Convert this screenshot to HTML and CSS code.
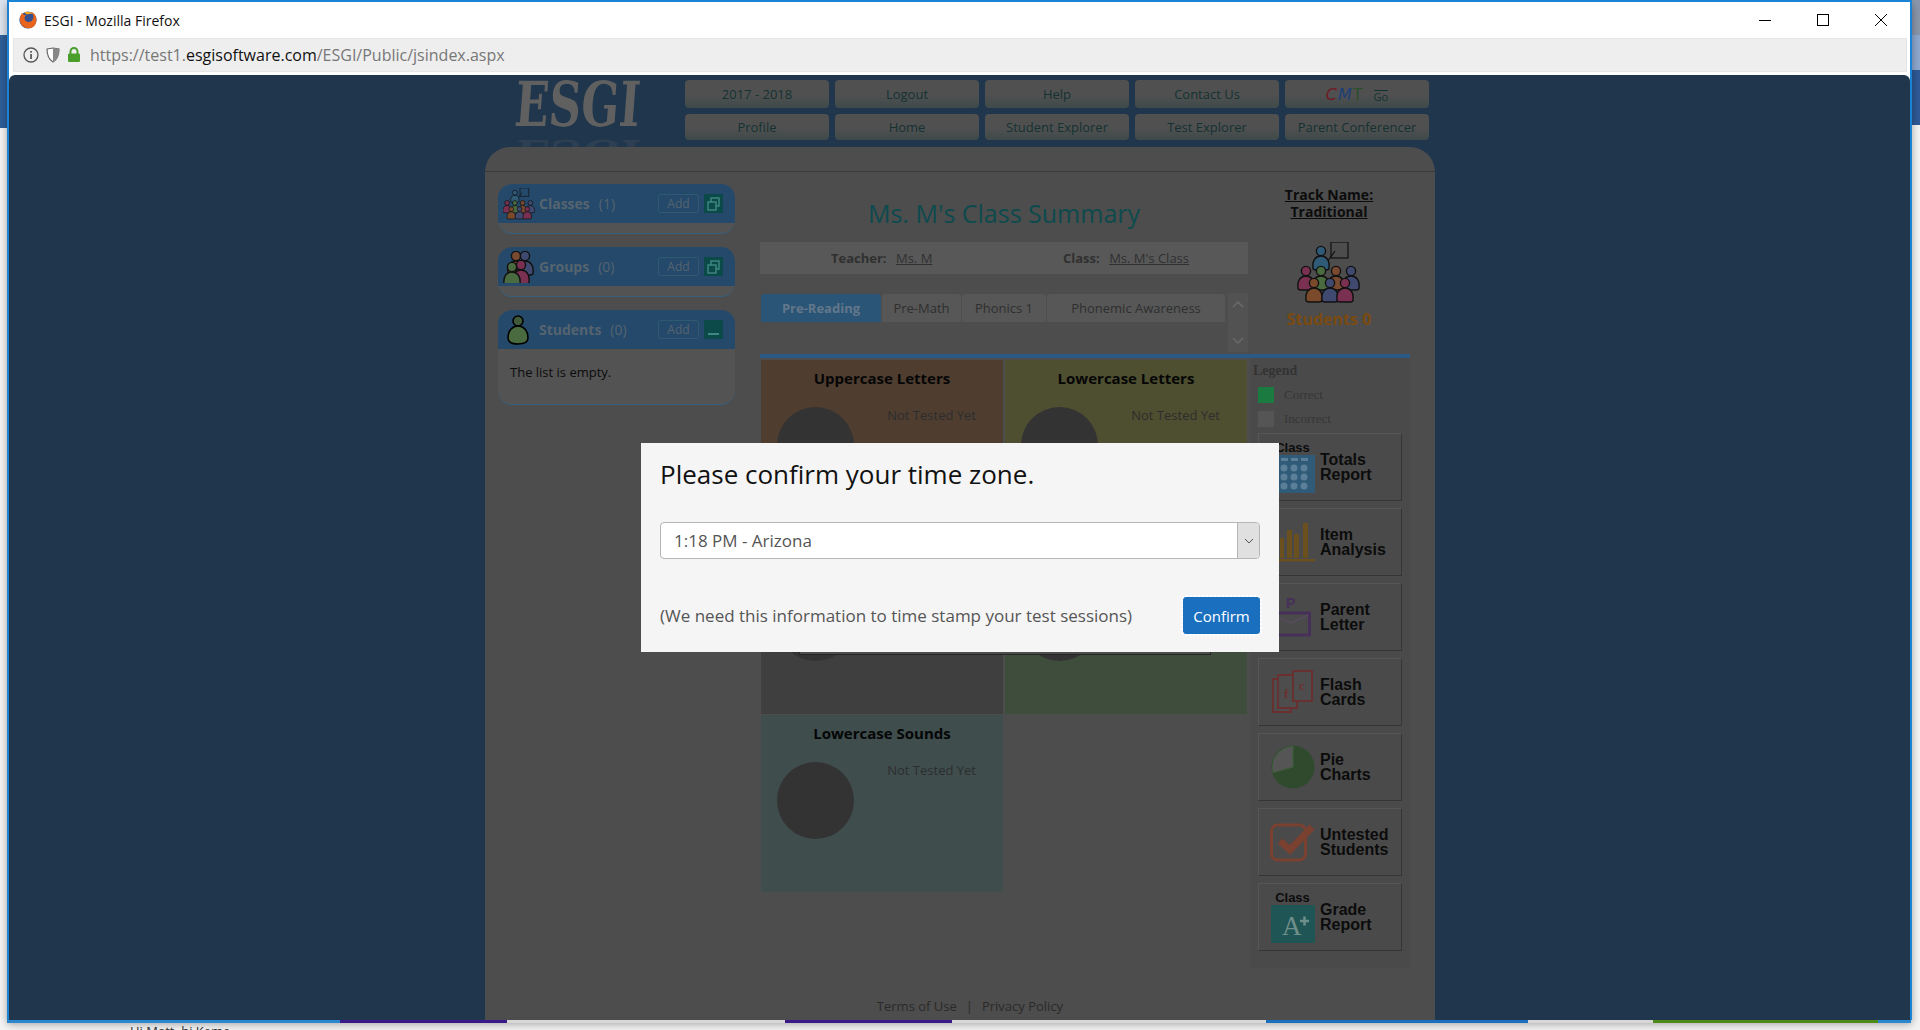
FILE: index.html
```html
<!DOCTYPE html>
<html lang="en">
  <head>
    <meta charset="UTF-8" />
    <title>ESGI - Mozilla Firefox</title>
    <link rel="stylesheet" href="styles.css">
  </head>
  <body>
    <svg class="defs" width="0" height="0">
      <defs>
        <g id="person">
          <path d="M-8 18 C-9 10 -5 6 0 6 C5 6 9 10 8 18 Q8 20 5 20 H-5 Q-8 20 -8 18Z" stroke="#111" stroke-width="1.4"/>
          <circle cy="1" r="4.6" stroke="#111" stroke-width="1.4"/>
        </g>
        <g id="crowd">
          <rect x="33" y="0" width="17" height="16" fill="none" stroke="#111" stroke-width="1.2"/>
          <path d="M37 9 L29 20" stroke="#111" stroke-width="1.2"/>
          <use href="#person" x="23" y="8" fill="#2f5a78"/>
          <use href="#person" x="8" y="28" fill="#7a3050"/>
          <use href="#person" x="38" y="28" fill="#7a4a30"/>
          <use href="#person" x="53" y="28" fill="#404a70"/>
          <use href="#person" x="23" y="28" fill="#4a6a40"/>
          <use href="#person" x="16" y="40" fill="#7a4a2a"/>
          <use href="#person" x="32" y="40" fill="#404a70"/>
          <use href="#person" x="47" y="40" fill="#7a3050"/>
        </g>
        <g id="expand">
          <rect x="0" y="0" width="19" height="19" fill="#0b4a48"/>
          <rect x="7" y="4" width="8" height="8" fill="none" stroke="#3f8a80" stroke-width="1.4"/>
          <rect x="4" y="8" width="8" height="8" fill="#0b4a48" stroke="#3f8a80" stroke-width="1.4"/>
        </g>
      </defs>
    </svg>

    <div class="desktop">
      <div class="edge edge-left">
        <div class="edge-a"></div>
        <div class="edge-b"></div>
      </div>
      <div class="edge edge-right">
        <div class="edge-c"></div>
        <div class="edge-d"></div>
        <div class="edge-e"></div>
      </div>

      <div class="window">
        <div class="titlebar">
          <svg class="ff-logo" width="18" height="18" viewBox="0 0 18 18">
            <circle cx="9" cy="9" r="8.6" fill="#35508f"/>
            <path d="M3 2 C1 5 0 9 2 13 C4 17 10 18.5 14 16 C17 14 18 10 17 6 C16 3 14 1.5 12 1 C14 3 15 5 14 8 C13 10.5 10 12 7.500 10.500 C5 9 5 6 7 4 C5 4 4 3.500 3 2Z" fill="#e8641c"/>
            <path d="M5 1.500 C8 0 12 0.500 14 3 C12 2.500 10 2.500 8 3.500Z" fill="#f6a51e"/>
          </svg>
          <span class="title-text">ESGI - Mozilla Firefox</span>
          <div class="win-btns">
            <svg width="14" height="14" viewBox="0 0 14 14"><path d="M1 7.500 H13" stroke="#000"/></svg>
            <svg width="14" height="14" viewBox="0 0 14 14"><rect x="1.500" y="1.500" width="11" height="11" fill="none" stroke="#000"/></svg>
            <svg width="14" height="14" viewBox="0 0 14 14"><path d="M1 1 L13 13 M13 1 L1 13" stroke="#000"/></svg>
          </div>
        </div>

        <div class="urlbar">
          <svg width="16" height="16" viewBox="0 0 16 16">
            <circle cx="8" cy="8" r="7" fill="none" stroke="#555" stroke-width="1.300"/>
            <rect x="7.200" y="7" width="1.700" height="5" fill="#555"/>
            <rect x="7.200" y="4" width="1.700" height="1.700" fill="#555"/>
          </svg>
          <svg width="14" height="16" viewBox="0 0 14 16">
            <path d="M1 2 L7 1 L13 2 C13 8 12 12 7 15 C2 12 1 8 1 2Z" fill="#fff" stroke="#666" stroke-width="1.200"/>
            <path d="M7 1 L13 2 C13 8 12 12 7 15Z" fill="#888"/>
          </svg>
          <svg width="14" height="16" viewBox="0 0 14 16">
            <path d="M3.500 7 V4.500 A3.500 3.500 0 0 1 10.500 4.500 V7" fill="none" stroke="#4a9e2c" stroke-width="2"/>
            <rect x="1" y="6.500" width="12" height="8.500" rx="1.200" fill="#4a9e2c"/>
          </svg>
          <span class="url">https://test1.<b>esgisoftware.com</b>/ESGI/Public/jsindex.aspx</span>
        </div>

        <div class="page">
          <div class="site">
            <div class="site-top">
              <div class="logo">
                <span class="logo-text">ESGI</span>
                <span class="logo-mirror" aria-hidden="true">ESGI</span>
              </div>
              <div class="nav">
                <div class="nav-btn">2017 - 2018</div>
                <div class="nav-btn">Logout</div>
                <div class="nav-btn">Help</div>
                <div class="nav-btn">Contact Us</div>
                <div class="nav-btn cmt">
                  <span class="cmt-word"><i class="c-red">C</i><i class="c-blue">M</i><i class="c-green">T</i></span>
                  <span class="cmt-go">Go</span>
                </div>
                <div class="nav-btn">Profile</div>
                <div class="nav-btn">Home</div>
                <div class="nav-btn">Student Explorer</div>
                <div class="nav-btn">Test Explorer</div>
                <div class="nav-btn">Parent Conferencer</div>
              </div>
            </div>

            <div class="panel">
              <div class="panel-head"></div>
              <div class="panel-body">
                <!-- left lists -->
                <div class="side">
                  <div class="card">
                    <div class="card-head">
                      <svg class="card-icon" width="32" height="32" viewBox="0 0 62 62"><use href="#crowd"/></svg>
                      <span class="card-name">Classes</span>
                      <span class="card-count">(1)</span>
                      <span class="add">Add</span>
                      <svg width="19" height="19" viewBox="0 0 19 19"><use href="#expand"/></svg>
                    </div>
                    <div class="card-foot"></div>
                  </div>
                  <div class="card">
                    <div class="card-head">
                      <svg class="card-icon" width="32" height="32" viewBox="0 0 32 32">
                        <use href="#person" x="13" y="4" fill="#7a4a30"/>
                        <use href="#person" x="22" y="4" fill="#404a70"/>
                        <use href="#person" x="18" y="13" fill="#7a3050"/>
                        <use href="#person" x="9" y="15" fill="#4a6a40"/>
                      </svg>
                      <span class="card-name">Groups</span>
                      <span class="card-count">(0)</span>
                      <span class="add">Add</span>
                      <svg width="19" height="19" viewBox="0 0 19 19"><use href="#expand"/></svg>
                    </div>
                    <div class="card-foot"></div>
                  </div>
                  <div class="card">
                    <div class="card-head">
                      <svg class="card-icon" width="32" height="32" viewBox="0 0 32 32">
                        <circle cx="15" cy="7" r="5" fill="#3f5a38" stroke="#000" stroke-width="1.600"/>
                        <path d="M5 24 C5 16 10 12 15 12 C20 12 25 16 25 24 C25 29 21 30 15 30 C9 30 5 29 5 24Z" fill="#4a6a40" stroke="#000" stroke-width="1.600"/>
                      </svg>
                      <span class="card-name">Students</span>
                      <span class="card-count">(0)</span>
                      <span class="add">Add</span>
                      <span class="collapse"></span>
                    </div>
                    <div class="card-text">The list is empty.</div>
                  </div>
                </div>

                <div class="content">
                  <div class="content-top">
                    <div class="summary">
                      <h1 class="summary-title">Ms. M's Class Summary</h1>
                      <div class="info">
                        <div class="info-item"><b>Teacher:</b> <u>Ms. M</u></div>
                        <div class="info-item"><b>Class:</b> <u>Ms. M's Class</u></div>
                      </div>
                      <div class="tabs-row">
                        <div class="tabs">
                          <div class="tab tab-active">Pre-Reading</div>
                          <div class="tab tab-math">Pre-Math</div>
                          <div class="tab tab-phonics">Phonics 1</div>
                          <div class="tab tab-aware">Phonemic Awareness</div>
                        </div>
                        <div class="tab-scroll">
                          <svg width="12" height="8" viewBox="0 0 12 8"><path d="M1 7 L6 2 L11 7" fill="none" stroke="#6a6a6a" stroke-width="1.500"/></svg>
                          <svg width="12" height="8" viewBox="0 0 12 8"><path d="M1 1 L6 6 L11 1" fill="none" stroke="#6a6a6a" stroke-width="1.500"/></svg>
                        </div>
                      </div>
                    </div>
                    <div class="track">
                      <div class="track-name">Track Name:<br>Traditional</div>
                      <svg class="track-icon" width="66" height="62" viewBox="0 0 62 62"><use href="#crowd"/></svg>
                      <div class="track-count">Students 0</div>
                    </div>
                  </div>
                  <div class="rule"></div>
                  <div class="content-main">
                    <div class="tiles">
                      <div class="tile tile-orange">
                        <div class="tile-title">Uppercase Letters</div>
                        <div class="tile-body"><div class="dot"></div><div class="tile-note">Not Tested Yet</div></div>
                      </div>
                      <div class="tile tile-olive">
                        <div class="tile-title">Lowercase Letters</div>
                        <div class="tile-body"><div class="dot"></div><div class="tile-note">Not Tested Yet</div></div>
                      </div>
                      <div class="tile tile-grey">
                        <div class="tile-title"></div>
                        <div class="tile-body"><div class="dot"></div></div>
                      </div>
                      <div class="tile tile-green">
                        <div class="tile-title"></div>
                        <div class="tile-body"><div class="dot"></div></div>
                      </div>
                      <div class="tile tile-teal">
                        <div class="tile-title">Lowercase Sounds</div>
                        <div class="tile-body"><div class="dot"></div><div class="tile-note">Not Tested Yet</div></div>
                      </div>
                    </div>

                    <div class="tools">
                      <div class="legend-title">Legend</div>
                      <div class="legend-row"><span class="swatch swatch-correct"></span>Correct</div>
                      <div class="legend-row"><span class="swatch swatch-wrong"></span>Incorrect</div>

                      <div class="report">
                        <div class="report-icon">
                          <span class="report-tag">Class</span>
                          <svg width="44" height="38" viewBox="0 0 44 38">
                            <rect width="44" height="38" fill="#2f5a78"/>
                            <g fill="#5b7f98">
                              <rect x="10" y="3" width="7" height="3"/><rect x="20" y="3" width="7" height="3"/><rect x="30" y="3" width="7" height="3"/>
                              <circle cx="13" cy="13" r="3.500"/><circle cx="23" cy="13" r="3.500"/><circle cx="33" cy="13" r="3.500"/>
                              <circle cx="13" cy="22" r="3.500"/><circle cx="23" cy="22" r="3.500"/><circle cx="33" cy="22" r="3.500"/>
                              <circle cx="13" cy="31" r="3.500"/><circle cx="23" cy="31" r="3.500"/><circle cx="33" cy="31" r="3.500"/>
                            </g>
                          </svg>
                        </div>
                        <div class="report-name">Totals<br>Report</div>
                      </div>
                      <div class="report">
                        <div class="report-icon">
                          <svg width="44" height="40" viewBox="0 0 44 40">
                            <g fill="#6a4f1f">
                              <rect x="9" y="16" width="4" height="20"/><rect x="16" y="8" width="5" height="28"/>
                              <rect x="23" y="12" width="5" height="24"/><rect x="32" y="1" width="5" height="35"/>
                              <rect x="0" y="37" width="44" height="2.500"/>
                            </g>
                          </svg>
                        </div>
                        <div class="report-name">Item<br>Analysis</div>
                      </div>
                      <div class="report">
                        <div class="report-icon">
                          <svg width="44" height="42" viewBox="0 0 44 42">
                            <text x="15" y="12" class="svg-p">P</text>
                            <rect x="1.500" y="17" width="37" height="22" fill="none" stroke="#46305a" stroke-width="3"/>
                            <path d="M3 19 L20 27 L37 19" fill="none" stroke="#5e4a6a" stroke-width="1"/>
                          </svg>
                        </div>
                        <div class="report-name">Parent<br>Letter</div>
                      </div>
                      <div class="report">
                        <div class="report-icon">
                          <svg width="44" height="44" viewBox="0 0 44 44">
                            <g fill="#4d4d4d" stroke="#6b2f2f" stroke-width="1.800">
                              <path d="M13 9 H2 V42 H20 V38"/>
                              <path d="M23 5 H7 V38 H26 V8"/>
                              <rect x="22" y="1" width="19" height="30"/>
                            </g>
                            <text x="13" y="28" class="svg-card">f</text>
                            <text x="28" y="20" class="svg-card">c</text>
                          </svg>
                        </div>
                        <div class="report-name">Flash<br>Cards</div>
                      </div>
                      <div class="report">
                        <div class="report-icon">
                          <svg width="44" height="44" viewBox="0 0 44 44">
                            <circle cx="22" cy="22" r="21.500" fill="#2f4a2c"/>
                            <path d="M22 22 L22 1.500 A20.500 20.500 0 0 0 2.200 27.500Z" fill="#555" stroke="#3f5f3c"/>
                          </svg>
                        </div>
                        <div class="report-name">Pie<br>Charts</div>
                      </div>
                      <div class="report">
                        <div class="report-icon">
                          <svg width="45" height="40" viewBox="0 0 45 40">
                            <rect x="1.500" y="3" width="34" height="35" rx="6" fill="none" stroke="#7a4030" stroke-width="3"/>
                            <path d="M10 19 L20 28 L42 5" fill="none" stroke="#7a4030" stroke-width="7"/>
                          </svg>
                        </div>
                        <div class="report-name">Untested<br>Students</div>
                      </div>
                      <div class="report">
                        <div class="report-icon">
                          <span class="report-tag">Class</span>
                          <svg width="44" height="38" viewBox="0 0 44 38">
                            <rect width="44" height="38" fill="#1f5555"/>
                            <text x="11" y="30" class="svg-grade">A</text>
                            <path d="M29 16 H38 M33.500 11.500 V20.500" stroke="#6f8f8a" stroke-width="2.500"/>
                          </svg>
                        </div>
                        <div class="report-name">Grade<br>Report</div>
                      </div>
                    </div>
                  </div>
                </div>
              </div>
              <div class="panel-foot">
                <span>Terms of Use</span><span class="foot-sep">|</span><span>Privacy Policy</span>
              </div>
            </div>
          </div>
        </div>
      </div>

      <div class="behind-strip">
        <span class="seg seg-1"></span><span class="seg seg-2"></span><span class="seg seg-3"></span>
        <span class="seg seg-2"></span><span class="seg seg-4"></span><span class="seg seg-5"></span>
        <span class="seg seg-6"></span><span class="seg seg-7"></span><span class="seg seg-8"></span>
      </div>
      <div class="behind-text">Hi Matt, hi Keme</div>

      <!-- dialogs on top of the page -->
      <div class="back-dialog"></div>
      <div class="modal">
        <div class="modal-title">Please confirm your time zone.</div>
        <div class="select">
          <span class="select-value">1:18 PM - Arizona</span>
          <span class="select-arrow">
            <svg width="10" height="6" viewBox="0 0 10 6"><path d="M1 1 L5 5 L9 1" fill="none" stroke="#555"/></svg>
          </span>
        </div>
        <div class="modal-foot">
          <span class="modal-note">(We need this information to time stamp your test sessions)</span>
          <span class="confirm">Confirm</span>
        </div>
      </div>
    </div>
  </body>
</html>
```

FILE: styles.css
```css
html, body {
  margin: 0;
  height: 100%;
  overflow: hidden;
  background: #f4f4f4;
}
.defs {
  position: absolute;
}
.desktop {
  position: relative;
  width: 1920px;
  height: 1030px;
  overflow: hidden;
  font-family: "Open Sans", "Noto Sans", sans-serif;
}
.edge {
  position: absolute;
  top: 0;
  width: 8px;
}
.edge-left {
  left: 0;
}
.edge-right {
  right: 0;
}
.edge-a {
  height: 35px;
  background: #dde3ee;
}
.edge-b {
  height: 93px;
  background: #2f5f9a;
}
.edge-c {
  height: 35px;
  background: #8a96ab;
}
.edge-d {
  height: 35px;
  background: #8fa8cf;
}
.edge-e {
  height: 55px;
  background: #2e5a96;
}

/* browser window */
.window {
  position: relative;
  margin-left: 7px;
  width: 1901px;
  height: 1018px;
  border: 2px solid #1a83d4;
  border-bottom: 0;
  background: #fff;
  display: flex;
  flex-direction: column;
  box-shadow: 0 4px 8px rgba(0, 0, 0, 0.35);
}
.titlebar {
  height: 36px;
  flex: none;
  display: flex;
  align-items: center;
  padding-left: 10px;
}
.ff-logo {
  margin-right: 7px;
}
.title-text {
  font-size: 14px;
  color: #111;
}
.win-btns {
  margin-left: auto;
  display: flex;
  gap: 44px;
  padding-right: 22px;
}
.urlbar {
  height: 34px;
  flex: none;
  margin: 0 3px 0 4px;
  background: #eeeeee;
  border: 1px solid #e6e6e6;
  box-sizing: border-box;
  display: flex;
  align-items: center;
  gap: 7px;
  padding-left: 9px;
}
.url {
  margin-left: 2px;
  font-size: 16px;
  color: #777;
}
.url b {
  font-weight: 400;
  color: #111;
}
.page {
  flex: 1;
  margin-top: 3px;
  background: #1f364c;
  border-radius: 6px 6px 0 0;
  overflow: hidden;
}

/* site */
.site {
  margin-left: 476px;
  width: 950px;
  height: 100%;
  display: flex;
  flex-direction: column;
}
.site-top {
  height: 72px;
  flex: none;
  display: flex;
  box-sizing: border-box;
  padding-top: 5px;
}
.logo {
  position: relative;
  width: 200px;
  flex: none;
}
.logo-text, .logo-mirror {
  position: absolute;
  left: 30px;
  top: -11px;
  font-family: "DejaVu Serif", serif;
  font-weight: 700;
  font-size: 62px;
  line-height: 72px;
  color: #606060;
  transform-origin: left center;
  transform: scaleX(0.72) skewX(-6deg);
}
.logo-mirror {
  top: 37px;
  opacity: 0.22;
  transform: scaleX(0.72) scaleY(-0.6) skewX(6deg);
}
.nav {
  display: grid;
  grid-template-columns: repeat(5, 144px);
  grid-template-rows: 28px 26px;
  gap: 6px;
}
.nav-btn {
  display: flex;
  align-items: center;
  justify-content: center;
  gap: 10px;
  border-radius: 4px;
  background: linear-gradient(#505050 55%, #3e4a4a);
  color: #143232;
  font-size: 13px;
}
.cmt-word {
  font-size: 16px;
  letter-spacing: 1px;
  font-family: "DejaVu Sans", sans-serif;
}
.c-red {
  color: #6e1a24;
}
.c-blue {
  color: #1d3f78;
}
.c-green {
  color: #2c4f2c;
  font-style: normal;
}
.cmt-go {
  font-size: 11px;
  border-top: 1px solid #143232;
  line-height: 11px;
  margin-top: 4px;
}
.panel {
  flex: 1;
  background: #4d4d4d;
  border-radius: 25px 25px 0 0;
  display: flex;
  flex-direction: column;
  position: relative;
  overflow: hidden;
}
.panel-head {
  height: 24px;
  flex: none;
  border-bottom: 1px solid #3a3a3a;
}
.panel-body {
  display: flex;
  gap: 25px;
  padding-left: 13px;
  flex: 1;
}
.panel-foot {
  flex: none;
  height: 21px;
  display: flex;
  justify-content: center;
  gap: 9px;
  padding-left: 20px;
  font-size: 13px;
  line-height: 15px;
  color: #2a2a2a;
}

/* left lists */
.side {
  width: 237px;
  flex: none;
  padding-top: 12px;
}
.card {
  background: #535353;
  border-radius: 14px;
  border-bottom: 1px solid #35607f;
  margin-bottom: 13px;
  overflow: hidden;
}
.card-head {
  height: 39px;
  background: #24496b;
  display: flex;
  align-items: center;
  padding: 0 12px 0 5px;
  font-size: 14px;
  color: #56646f;
}
.card-icon {
  flex: none;
  margin-right: 4px;
}
.card-name {
  font-weight: 700;
}
.card-count {
  margin-left: 9px;
}
.add {
  margin-left: auto;
  margin-right: 5px;
  width: 41px;
  height: 19px;
  box-sizing: border-box;
  border: 1px solid #2d5a6e;
  border-radius: 2px;
  text-align: center;
  font-size: 12px;
  line-height: 17px;
}
.collapse {
  width: 19px;
  height: 19px;
  background: #0b4a48;
  position: relative;
}
.collapse::after {
  content: "";
  position: absolute;
  left: 4px;
  right: 4px;
  bottom: 4px;
  height: 2px;
  background: #3f8a80;
}
.card-foot {
  height: 10px;
}
.card-text {
  height: 55px;
  box-sizing: border-box;
  padding: 14px 12px;
  font-size: 13px;
  line-height: 18px;
  color: #0c0c0c;
}

/* summary */
.content {
  width: 650px;
  flex: none;
  display: flex;
  flex-direction: column;
}
.content-top {
  height: 182px;
  flex: none;
  display: flex;
}
.summary {
  width: 488px;
  flex: none;
  padding-top: 25px;
}
.summary-title {
  margin: 0;
  font-weight: 400;
  font-size: 25px;
  line-height: 32px;
  text-align: center;
  color: #0d4a4e;
}
.info {
  margin-top: 13px;
  height: 32px;
  background: #585858;
  display: grid;
  grid-template-columns: 303px 1fr;
  align-items: center;
  font-size: 13px;
  color: #303030;
}
.info-item {
  padding-left: 71px;
}
.info-item + .info-item {
  padding-left: 0;
}
.info-item b {
  margin-right: 6px;
}
.tabs-row {
  margin-top: 20px;
  display: flex;
  justify-content: space-between;
  padding-left: 1px;
}
.tabs {
  display: flex;
  gap: 1px;
  height: 28px;
}
.tab {
  display: flex;
  align-items: center;
  justify-content: center;
  background: #575757;
  border-radius: 3px 3px 0 0;
  font-size: 13px;
  color: #2f2f2f;
}
.tab-active {
  width: 120px;
  background: #2b5577;
  color: #62778a;
  font-weight: 700;
}
.tab-math {
  width: 79px;
}
.tab-phonics {
  width: 84px;
}
.tab-aware {
  width: 178px;
}
.tab-scroll {
  width: 20px;
  height: 59px;
  margin-top: -1px;
  background: #525252;
  display: flex;
  flex-direction: column;
  align-items: center;
  justify-content: space-between;
  padding: 7px 0;
  box-sizing: border-box;
}
.track {
  flex: 1;
  display: flex;
  flex-direction: column;
  align-items: center;
  padding-top: 14px;
}
.track-name {
  font-size: 14px;
  line-height: 17px;
  font-weight: 700;
  text-align: center;
  text-decoration: underline;
  color: #0c0c0c;
}
.track-icon {
  margin-top: 22px;
}
.track-count {
  margin-top: 5px;
  font-size: 16px;
  line-height: 20px;
  font-weight: 700;
  color: #7a4a10;
}
.rule {
  height: 4px;
  flex: none;
  background: #2a5a85;
}
.content-main {
  display: flex;
  flex: 1;
}

/* tiles */
.tiles {
  margin: 2px 3px 0 1px;
  width: 486px;
  flex: none;
  display: grid;
  grid-template-columns: 242px 242px;
  grid-template-rows: 176px 177px 177px;
  gap: 1px 2px;
}
.tile-orange {
  background: #4f3d30;
}
.tile-olive {
  background: #4d4f30;
}
.tile-grey {
  background: #3f3f3f;
}
.tile-green {
  background: #3f4d3d;
}
.tile-teal {
  background: #3f4d4d;
}
.tile-title {
  height: 20px;
  margin-top: 8px;
  font-size: 15px;
  line-height: 20px;
  font-weight: 700;
  text-align: center;
  color: #060606;
}
.tile-body {
  display: flex;
  justify-content: space-between;
  margin-top: 18px;
  padding: 0 27px 0 16px;
}
.dot {
  width: 77px;
  height: 77px;
  margin-top: 1px;
  border-radius: 50%;
  background: #333333;
}
.tile-note {
  font-size: 13px;
  line-height: 18px;
  color: #2d2d2d;
}

/* legend and report buttons */
.tools {
  width: 160px;
  height: 610px;
  flex: none;
  box-sizing: border-box;
  padding: 5px 0 0 8px;
  background: #4a4a4a;
  display: flex;
  flex-direction: column;
  font-family: "Liberation Serif", serif;
}
.legend-title {
  margin-left: -5px;
  font-size: 14px;
  line-height: 16px;
  font-weight: 700;
  color: #333;
}
.legend-row {
  display: flex;
  align-items: center;
  gap: 10px;
  height: 17px;
  margin-top: 7px;
  font-size: 13px;
  color: #363636;
}
.swatch {
  width: 16px;
  height: 16px;
}
.swatch-correct {
  background: #1a7a40;
}
.swatch-wrong {
  background: #555;
}
.report {
  width: 144px;
  height: 68px;
  box-sizing: border-box;
  flex: none;
  margin-bottom: 7px;
  display: flex;
  align-items: center;
  gap: 5px;
  padding-left: 11px;
  border: 1px solid #565656;
  border-right-color: #363636;
  border-bottom-color: #363636;
  font-family: "Liberation Sans", Arial, sans-serif;
}
.legend-row + .report {
  margin-top: 6px;
}
.report-icon {
  width: 45px;
  flex: none;
  display: flex;
  flex-direction: column;
  align-items: center;
}
.report-tag {
  font-size: 13px;
  line-height: 14px;
  font-weight: 700;
  color: #0c0c0c;
}
.report-name {
  font-size: 16px;
  line-height: 15px;
  font-weight: 700;
  color: #0c0c0c;
}
.svg-p {
  font-family: "Liberation Sans", sans-serif;
  font-size: 14px;
  font-weight: 700;
  fill: #46305a;
}
.svg-card {
  font-family: "Liberation Serif", serif;
  font-size: 13px;
  font-weight: 700;
  fill: #6b2f2f;
}
.svg-grade {
  font-family: "Liberation Serif", serif;
  font-size: 27px;
  fill: #6f8f8a;
}

/* what shows below the window */
.behind-strip {
  position: relative;
  display: flex;
  margin-left: 7px;
  width: 1905px;
  height: 3px;
}
.seg-1 {
  width: 333px;
  background: #2b86d0;
}
.seg-2 {
  width: 167px;
  background: #3a1a8a;
}
.seg-3 {
  width: 278px;
  background: #d8d8d8;
}
.seg-4 {
  width: 314px;
  background: #d8d8d8;
}
.seg-5 {
  width: 262px;
  background: #1a6fbf;
}
.seg-6 {
  width: 125px;
  background: #d8d8d8;
}
.seg-7 {
  width: 225px;
  background: #4d8a1a;
}
.seg-8 {
  width: 33px;
  background: #2b86d0;
}
.behind-text {
  margin-left: 130px;
  margin-top: 0;
  font-size: 13px;
  line-height: 16px;
  color: #333;
}

/* dialogs */
.back-dialog {
  position: absolute;
  left: 799px;
  top: 500px;
  width: 410px;
  height: 153px;
  background: #4d4d4d;
  border: 1px solid #262626;
}
.modal {
  position: absolute;
  left: 641px;
  top: 443px;
  width: 638px;
  height: 209px;
  box-sizing: border-box;
  padding: 13px 19px 0;
  background: #f5f5f5;
}
.modal-title {
  font-size: 26px;
  line-height: 36px;
  color: #111;
}
.select {
  margin-top: 30px;
  height: 37px;
  box-sizing: border-box;
  border: 1px solid #b5b5b5;
  border-radius: 4px;
  background: #fff;
  display: flex;
  align-items: center;
  justify-content: space-between;
  overflow: hidden;
}
.select-value {
  padding-left: 13px;
  font-size: 17px;
  color: #555;
}
.select-arrow {
  width: 21px;
  height: 100%;
  background: #e0e0e0;
  border-left: 1px solid #b5b5b5;
  display: flex;
  align-items: center;
  justify-content: center;
}
.modal-foot {
  margin-top: 38px;
  display: flex;
  align-items: center;
  justify-content: space-between;
}
.modal-note {
  font-size: 17px;
  color: #555;
}
.confirm {
  width: 77px;
  height: 37px;
  border-radius: 3px;
  background: #1a6fbf;
  outline: 2px dotted #fff;
  display: flex;
  align-items: center;
  justify-content: center;
  font-size: 15px;
  color: #fff;
}
```
